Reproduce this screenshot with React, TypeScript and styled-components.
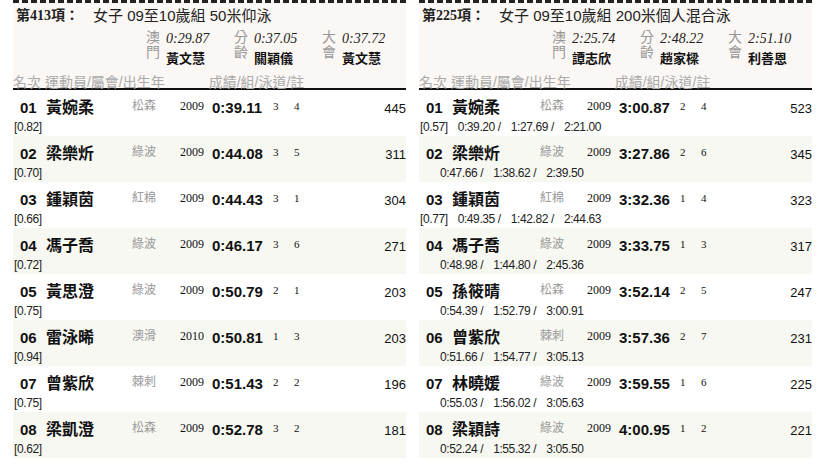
import styled, { createGlobalStyle } from 'styled-components'

const Global = createGlobalStyle`
  body { margin: 0; background: #fff; font-family: "Liberation Sans", "Noto Sans CJK TC", sans-serif; color: #111; }
`

type Rec = { label: [string, string]; time: string; name: string }
type Row = { rank: string; name: string; club: string; year: string; time: string; heat: string; lane: string; pts: string; rt: string; splits?: string[] }
type Event = { no: string; title: string; recs: Rec[]; rows: Row[] }

const left: Event = {
  no: '413', title: '女子 09至10歲組  50米仰泳',
  recs: [
    { label: ['澳', '門'], time: '0:29.87', name: '黃文慧' },
    { label: ['分', '齡'], time: '0:37.05', name: '關穎儀' },
    { label: ['大', '會'], time: '0:37.72', name: '黃文慧' },
  ],
  rows: [
    { rank: '01', name: '黃婉柔', club: '松森', year: '2009', time: '0:39.11', heat: '3', lane: '4', pts: '445', rt: '[0.82]' },
    { rank: '02', name: '梁樂炘', club: '綠波', year: '2009', time: '0:44.08', heat: '3', lane: '5', pts: '311', rt: '[0.70]' },
    { rank: '03', name: '鍾穎茵', club: '紅棉', year: '2009', time: '0:44.43', heat: '3', lane: '1', pts: '304', rt: '[0.66]' },
    { rank: '04', name: '馮子喬', club: '綠波', year: '2009', time: '0:46.17', heat: '3', lane: '6', pts: '271', rt: '[0.72]' },
    { rank: '05', name: '黃思澄', club: '綠波', year: '2009', time: '0:50.79', heat: '2', lane: '1', pts: '203', rt: '[0.75]' },
    { rank: '06', name: '雷泳晞', club: '澳滑', year: '2010', time: '0:50.81', heat: '1', lane: '3', pts: '203', rt: '[0.94]' },
    { rank: '07', name: '曾紫欣', club: '棘刺', year: '2009', time: '0:51.43', heat: '2', lane: '2', pts: '196', rt: '[0.75]' },
    { rank: '08', name: '梁凱澄', club: '松森', year: '2009', time: '0:52.78', heat: '3', lane: '2', pts: '181', rt: '[0.62]' },
  ],
}

const right: Event = {
  no: '225', title: '女子 09至10歲組  200米個人混合泳',
  recs: [
    { label: ['澳', '門'], time: '2:25.74', name: '譚志欣' },
    { label: ['分', '齡'], time: '2:48.22', name: '趙家樑' },
    { label: ['大', '會'], time: '2:51.10', name: '利善恩' },
  ],
  rows: [
    { rank: '01', name: '黃婉柔', club: '松森', year: '2009', time: '3:00.87', heat: '2', lane: '4', pts: '523', rt: '[0.57]', splits: ['0:39.20', '1:27.69', '2:21.00'] },
    { rank: '02', name: '梁樂炘', club: '綠波', year: '2009', time: '3:27.86', heat: '2', lane: '6', pts: '345', rt: '', splits: ['0:47.66', '1:38.62', '2:39.50'] },
    { rank: '03', name: '鍾穎茵', club: '紅棉', year: '2009', time: '3:32.36', heat: '1', lane: '4', pts: '323', rt: '[0.77]', splits: ['0:49.35', '1:42.82', '2:44.63'] },
    { rank: '04', name: '馮子喬', club: '綠波', year: '2009', time: '3:33.75', heat: '1', lane: '3', pts: '317', rt: '', splits: ['0:48.98', '1:44.80', '2:45.36'] },
    { rank: '05', name: '孫筱晴', club: '松森', year: '2009', time: '3:52.14', heat: '2', lane: '5', pts: '247', rt: '', splits: ['0:54.39', '1:52.79', '3:00.91'] },
    { rank: '06', name: '曾紫欣', club: '棘刺', year: '2009', time: '3:57.36', heat: '2', lane: '7', pts: '231', rt: '', splits: ['0:51.66', '1:54.77', '3:05.13'] },
    { rank: '07', name: '林曉媛', club: '綠波', year: '2009', time: '3:59.55', heat: '1', lane: '6', pts: '225', rt: '', splits: ['0:55.03', '1:56.02', '3:05.63'] },
    { rank: '08', name: '梁穎詩', club: '綠波', year: '2009', time: '4:00.95', heat: '1', lane: '2', pts: '221', rt: '', splits: ['0:52.24', '1:55.32', '3:05.50'] },
  ],
}

const Page = styled.div`
  display: flex;
  gap: 13px;
  padding: 0 15px 0 13px;
  width: 827px;
  box-sizing: border-box;
`

const Panel = styled.div`
  width: 393px;
  display: flex;
  flex-direction: column;
`

const Head = styled.div`
  background: #fbf7f4;
  border-top: 3px dashed #222;
  padding: 2px 0 0 3px;
  height: 90px;
  box-sizing: border-box;
  border-bottom: 2px solid #111;
  display: flex;
  flex-direction: column;
`

const Title = styled.div`
  font-size: 15px;
  line-height: 22px;
  height: 22px;
  display: flex;
  align-items: center;
  gap: 14px;
  color: #222;
`

const No = styled.span`
  font-family: "Liberation Serif", "Noto Sans CJK TC", serif;
  font-weight: bold;
  font-size: 14px;
`

const Recs = styled.div`
  display: flex;
  padding-left: 130px;
  gap: 8px;
  height: 42px;
  padding-top: 2px;
`

const RecBox = styled.div`
  display: flex;
  gap: 6px;
  width: 80px;
`

const RecLabel = styled.div`
  display: flex;
  flex-direction: column;
  font-size: 14px;
  line-height: 15px;
  color: #999;
  padding-top: 1px;
`

const RecVal = styled.div`
  display: flex;
  flex-direction: column;
`

const RecTime = styled.span`
  font-family: "Liberation Serif", serif;
  font-style: italic;
  font-size: 14px;
  line-height: 19px;
  color: #222;
`

const RecName = styled.span`
  font-weight: bold;
  font-size: 13px;
  line-height: 22px;
`

const Cols = styled.div`
  font-size: 14px;
  line-height: 18px;
  color: #aaa;
  display: flex;
  gap: 44px;
  margin-left: -3px;
  height: 18px;
  align-items: center;
  margin-top: 3px;
`

const RowBox = styled.div<{ $shade: boolean }>`
  background: ${p => (p.$shade ? '#f7f8f1' : '#fff')};
  height: 46px;
  display: flex;
  flex-direction: column;
  padding: 5px 0 0 1px;
  box-sizing: border-box;
`

const Line = styled.div<{ $wide: boolean }>`
  display: grid;
  grid-template-columns: 26px ${p => (p.$wide ? '88px 47px' : '86px 48px')} 32px 61px 21px 1fr 40px;
  align-items: baseline;
  height: 24px;
  line-height: 22px;
  padding-left: 6px;
`

const Rank = styled.span`font-weight: bold; font-size: 15px;`
const Name = styled.span`font-weight: bold; font-size: 16px; font-family: "Noto Sans CJK TC", sans-serif; color: #111;`
const Club = styled.span`font-size: 12px; color: #999; font-family: "Liberation Serif", "Noto Sans CJK TC", serif; position: relative; top: -3px;`
const Year = styled.span`font-size: 12px; font-family: "Liberation Serif", serif; position: relative; top: -3px;`
const Time = styled.span`font-weight: bold; font-size: 15px;`
const Small = styled.span`font-size: 11px; font-family: "Liberation Serif", serif; position: relative; top: -3px;`
const Pts = styled.span`font-size: 13px; text-align: right;`

const Sub = styled.div`
  font-size: 12px;
  line-height: 16px;
  color: #222;
  display: flex;
  gap: 10px;
  height: 16px;
  align-items: center;
  letter-spacing: -0.4px;
`

const Rt = styled.span<{ $w: number }>`
  display: inline-block;
  min-width: ${p => p.$w}px;
`

function EventPanel({ ev }: { ev: Event }) {
  const wide = !!ev.rows[0].splits
  return (
    <Panel>
      <Head>
        <Title><No>第{ev.no}項：</No><span>{ev.title}</span></Title>
        <Recs>
          {ev.recs.map(r => (
            <RecBox key={r.label[0]}>
              <RecLabel><span>{r.label[0]}</span><span>{r.label[1]}</span></RecLabel>
              <RecVal><RecTime>{r.time}</RecTime><RecName>{r.name}</RecName></RecVal>
            </RecBox>
          ))}
        </Recs>
        <Cols><span>名次 運動員/屬會/出生年</span><span>成績/組/泳道/註</span></Cols>
      </Head>
      {ev.rows.map((r, i) => (
        <RowBox key={r.rank} $shade={i % 2 === 1}>
          <Line $wide={wide}>
            <Rank>{r.rank}</Rank>
            <Name>{r.name}</Name>
            <Club>{r.club}</Club>
            <Year>{r.year}</Year>
            <Time>{r.time}</Time>
            <Small>{r.heat}</Small>
            <Small>{r.lane}</Small>
            <Pts>{r.pts}</Pts>
          </Line>
          <Sub>
            <Rt $w={wide ? 10 : 0}>{r.rt}</Rt>
            {r.splits && r.splits.map((s, k) => (
              <span key={k}>{s}{k < 2 ? ' /' : ''}</span>
            ))}
          </Sub>
        </RowBox>
      ))}
    </Panel>
  )
}

export default function App() {
  return (
    <>
      <Global />
      <Page>
        <EventPanel ev={left} />
        <EventPanel ev={right} />
      </Page>
    </>
  )
}
